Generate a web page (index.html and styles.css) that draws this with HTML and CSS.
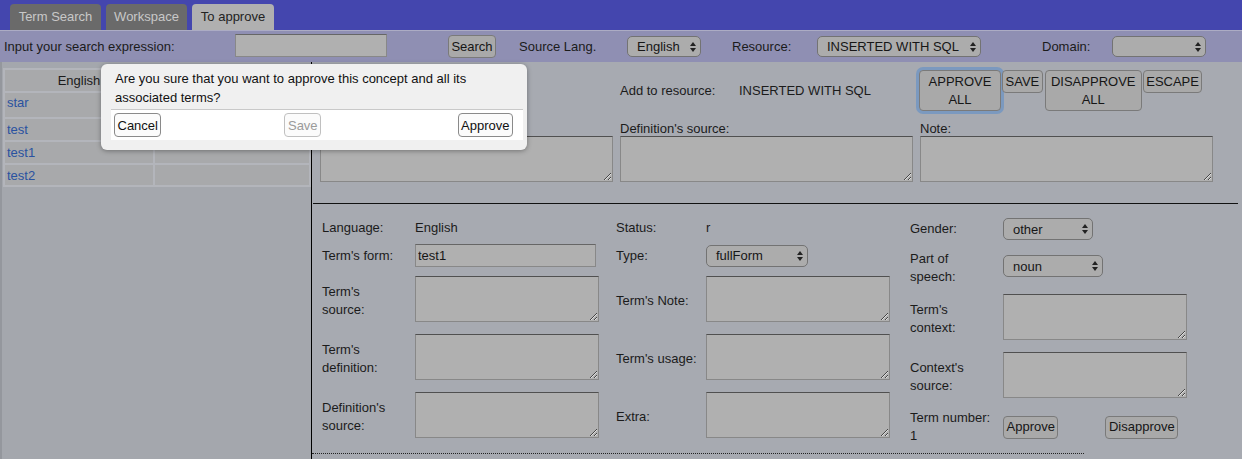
FILE: index.html
```html
<!DOCTYPE html>
<html>
<head>
<meta charset="utf-8">
<link rel="stylesheet" href="styles.css">
</head>
<body>
<div class="topbar">
  <div class="tab tab-1">Term Search</div>
  <div class="tab tab-2">Workspace</div>
  <div class="tab tab-3 active">To approve</div>
</div>
<div class="searchbar">
  <span>Input your search expression:</span>
  <input class="search-input" type="text">
  <button class="btn btn-search">Search</button>
  <span>Source Lang.</span>
  <div class="select sel-lang"><span>English</span><svg class="arrows" width="6" height="10" viewBox="0 0 6 10"><polygon points="0,4 3,0 6,4"/><polygon points="0,6 3,10 6,6"/></svg></div>
  <span>Resource:</span>
  <div class="select sel-res"><span>INSERTED WITH SQL</span><svg class="arrows" width="6" height="10" viewBox="0 0 6 10"><polygon points="0,4 3,0 6,4"/><polygon points="0,6 3,10 6,6"/></svg></div>
  <span>Domain:</span>
  <div class="select sel-dom"><span></span><svg class="arrows" width="6" height="10" viewBox="0 0 6 10"><polygon points="0,4 3,0 6,4"/><polygon points="0,6 3,10 6,6"/></svg></div>
</div>
<div class="content">
  <aside class="left">
    <table class="terms">
      <tr class="r-head"><th class="col-a">English</th><th class="col-b"></th></tr>
      <tr class="r-star"><td><a>star</a></td><td></td></tr>
      <tr class="r-21"><td><a>test</a></td><td></td></tr>
      <tr class="r-21"><td><a>test1</a></td><td></td></tr>
      <tr class="r-20"><td><a>test2</a></td><td></td></tr>
    </table>
  </aside>
  <main class="main">
    <section class="concept">
      <div class="cell"></div>
      <div class="cell resource"><span class="res-label">Add to resource:</span><span>INSERTED WITH SQL</span></div>
      <div class="cell actions">
        <button class="btn big focused w82">APPROVE<br>ALL</button>
        <button class="btn small">SAVE</button>
        <button class="btn big w97">DISAPPROVE<br>ALL</button>
        <button class="btn small">ESCAPE</button>
      </div>
      <label class="clabel">Definition:</label>
      <label class="clabel">Definition's source:</label>
      <label class="clabel">Note:</label>
      <textarea class="ta ta-wide"></textarea>
      <textarea class="ta ta-wide"></textarea>
      <textarea class="ta ta-wide"></textarea>
    </section>
    <div class="rule"></div>
    <section class="term">
      <div class="tcol c1">
        <span class="lbl top">Language:</span><span class="val top">English</span>
        <span class="lbl">Term's form:</span><input class="field" type="text" value="test1">
        <span class="lbl low">Term's<br>source:</span><textarea class="ta ta-std"></textarea>
        <span class="lbl low">Term's<br>definition:</span><textarea class="ta ta-std"></textarea>
        <span class="lbl low">Definition's<br>source:</span><textarea class="ta ta-std"></textarea>
      </div>
      <div class="tcol c2">
        <span class="lbl top">Status:</span><span class="val top">r</span>
        <span class="lbl">Type:</span>
        <div class="select sel-type"><span>fullForm</span><svg class="arrows" width="6" height="10" viewBox="0 0 6 10"><polygon points="0,4 3,0 6,4"/><polygon points="0,6 3,10 6,6"/></svg></div>
        <span class="lbl low">Term's Note:</span><textarea class="ta ta-std"></textarea>
        <span class="lbl low">Term's usage:</span><textarea class="ta ta-std"></textarea>
        <span class="lbl low">Extra:</span><textarea class="ta ta-std"></textarea>
      </div>
      <div class="tcol c3">
        <span class="lbl">Gender:</span>
        <div class="select sel-gender"><span>other</span><svg class="arrows" width="6" height="10" viewBox="0 0 6 10"><polygon points="0,4 3,0 6,4"/><polygon points="0,6 3,10 6,6"/></svg></div>
        <span class="lbl low">Part of<br>speech:</span>
        <div class="select sel-pos"><span>noun</span><svg class="arrows" width="6" height="10" viewBox="0 0 6 10"><polygon points="0,4 3,0 6,4"/><polygon points="0,6 3,10 6,6"/></svg></div>
        <span class="lbl low">Term's<br>context:</span><textarea class="ta ta-std"></textarea>
        <span class="lbl low">Context's<br>source:</span><textarea class="ta ta-std"></textarea>
        <span class="lbl">Term number:<br>1</span>
        <div class="term-actions"><button class="btn">Approve</button><button class="btn disapprove">Disapprove</button></div>
      </div>
    </section>
    <div class="dotted"></div>
  </main>
  <div class="dialog">
    <p class="dialog-text">Are you sure that you want to approve this concept and all its associated terms?</p>
    <div class="dialog-bar">
      <button class="dbtn">Cancel</button>
      <button class="dbtn disabled save">Save</button>
      <button class="dbtn approve">Approve</button>
    </div>
  </div>
</div>
</body>
</html>
```

FILE: styles.css
```css
html, body {
  margin: 0;
  padding: 0;
}
body {
  font-family: "Liberation Sans", Arial, Helvetica, sans-serif;
  font-size: 13px;
  color: #1b1b1b;
  background: #a7aab1;
  width: 1242px;
  height: 459px;
  overflow: hidden;
}
button, input, textarea {
  font-family: "Liberation Sans", Arial, Helvetica, sans-serif;
  font-size: 13px;
}

/* top tabs */
.topbar {
  height: 30px;
  background: #4446ae;
  display: flex;
  align-items: flex-end;
  gap: 5px;
  padding-left: 10px;
  box-sizing: border-box;
}
.tab {
  height: 26px;
  line-height: 26px;
  text-align: center;
  background: #6a6a6a;
  color: #c8c8c8;
  border-radius: 4px 4px 0 0;
}
.tab-1 { width: 91px; }
.tab-2 { width: 81px; }
.tab-3 { width: 82px; }
.tab.active {
  background: #b0b0b0;
  color: #222;
}

/* search bar */
.searchbar {
  height: 32px;
  box-sizing: border-box;
  border-top: 1px solid #acacc4;
  background: #8f8fb3;
  display: grid;
  grid-template-columns: 231px 213px 71px 108px 105px 85px 225px 70px auto;
  align-items: center;
  padding-left: 4px;
  color: #1b1b1b;
}
.searchbar > * { justify-self: start; }
.search-input {
  width: 152px;
  height: 23px;
  box-sizing: border-box;
  background: #b0b0b0;
  border: 1px solid #888;
  border-top-color: #666;
  margin: 0;
  margin-top: -2px;
}
.btn {
  background: #a9a9a9;
  border: 1px solid #7a7a7a;
  border-radius: 4px;
  color: #161616;
  padding: 0 2.5px;
  height: 23px;
  margin: 0;
  line-height: 18px;
  cursor: default;
}
.btn-search { width: 48px; padding: 0; }

.select {
  display: inline-flex;
  align-items: center;
  justify-content: space-between;
  height: 21px;
  box-sizing: border-box;
  border: 1px solid #737373;
  border-radius: 5px;
  background: #acacac;
  padding: 0 4px 0 9px;
  color: #161616;
}
.arrows { fill: #222; }
.sel-lang { width: 74px; }
.sel-res { width: 164px; }
.sel-dom { width: 94px; }
.sel-type { width: 102px; height: 22px; }
.sel-gender { width: 90px; height: 22px; }
.sel-pos { width: 100px; height: 22px; }

/* content */
.content {
  position: relative;
  display: flex;
  height: 397px;
}
.left {
  width: 309px;
  border-left: 2px solid #94979d;
  background: #a4a7ad;
  flex: none;
}
.terms {
  margin: 6px 0 0 1px;
  width: 308px;
  border-spacing: 2px;
  background: #b3b5bb;
  table-layout: fixed;
}
.terms th, .terms td {
  background: #a8a9ab;
  padding: 0 2px;
  font-weight: normal;
  text-align: left;
  vertical-align: middle;
}
.terms th.col-a { width: 144px; text-align: center; }
.terms .r-head th { height: 21px; }
.terms .r-star td { height: 24px; vertical-align: top; padding-top: 2px; box-sizing: border-box; }
.terms .r-21 td { height: 21px; }
.terms .r-20 td { height: 20px; }
.terms a { color: #2a52a0; }

.main {
  flex: 1;
  border-left: 1px solid #000;
}

.concept {
  display: grid;
  grid-template-columns: 300px 300px 300px;
  padding: 8px 0 0 8px;
}
.cell { min-height: 41px; }
.resource {
  display: flex;
  align-items: center;
}
.res-label { width: 119px; }
.actions {
  display: flex;
  align-items: flex-start;
  gap: 1px;
  margin-left: -1px;
}
.btn.big { height: 41px; padding: 0; line-height: 18px; }
.btn.w82 { width: 82px; }
.btn.w97 { width: 97px; margin-left: 1px; }
.btn.small { padding: 0 2.5px; }
.btn.focused { box-shadow: 0 0 0 3px #7b99bf; }
.clabel {
  margin-top: 10px;
  line-height: 15px;
}
.ta {
  box-sizing: border-box;
  background: #b0b0b0;
  border: 1px solid #888;
  border-top-color: #505050;
  margin: 0;
  padding: 2px;
  display: block;
}
.ta-wide { width: 293px; height: 46px; }
.ta-std { width: 184px; height: 46px; }

.rule {
  margin: 21px 4px 0 1px;
  border-top: 1px solid #111;
}

.term {
  display: flex;
  padding-left: 10px;
}
.tcol {
  display: grid;
  grid-template-columns: 93px 184px;
  align-items: center;
}
.c1, .c2 {
  width: 294px;
  margin-top: 16px;
  grid-template-rows: 24px 23px 64px 52px 64px;
}
.c2 { grid-template-columns: 90px 184px; }
.c3 {
  margin-top: 10px;
  grid-template-rows: 30px 44px 58px 58px 46px;
}
.lbl {
  line-height: 18px;
  white-space: nowrap;
}
.lbl.low { padding-top: 4px; }
.top { align-self: start; line-height: 16px; }
.field {
  width: 181px;
  height: 23px;
  box-sizing: border-box;
  background: #b0b0b0;
  border: 1px solid #888;
  border-top-color: #666;
  padding: 0 2px;
  margin: 0;
  color: #161616;
}
.term-actions {
  display: flex;
  align-items: center;
}
.term-actions .disapprove { margin-left: 47px; }

.dotted {
  width: 772px;
  margin-top: 3px;
  border-top: 1px dotted #222;
}

/* dialog */
.dialog {
  position: absolute;
  top: 2px;
  left: 101px;
  width: 426px;
  height: 86px;
  background: #f0f0f0;
  border-radius: 6px;
  box-shadow: 0 1px 5px rgba(0, 0, 0, 0.35);
  box-sizing: border-box;
  padding-top: 5px;
}
.dialog-text {
  margin: 0;
  padding: 0 14px;
  line-height: 19px;
  color: #111;
}
.dialog-bar {
  margin: 2px 4px 0 10px;
  height: 31px;
  box-sizing: border-box;
  border-top: 1px solid #c9c9c9;
  background: #fff;
  display: flex;
  align-items: center;
  padding: 0 10px 0 3px;
}
.dbtn {
  height: 24px;
  background: #fbfbfb;
  border: 1px solid #8a8a8a;
  border-radius: 4px;
  padding: 0 2.5px;
  color: #111;
  margin: 0;
}
.dbtn.disabled {
  color: #9a9a9a;
  border-color: #c0c0c0;
}
.dbtn.save { margin-left: 123px; }
.dbtn.approve { margin-left: auto; }
```
